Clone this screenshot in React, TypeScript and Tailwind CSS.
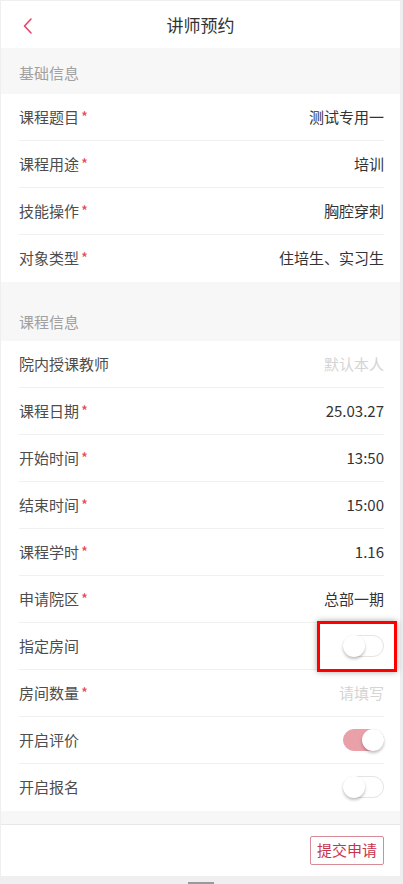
import React from 'react';

type Row = {
  label: string;
  required?: boolean;
  value?: string;
  placeholder?: boolean;
  toggle?: 'on' | 'off';
  highlight?: boolean;
};

const basicRows: Row[] = [
  { label: '课程题目', required: true, value: '测试专用一' },
  { label: '课程用途', required: true, value: '培训' },
  { label: '技能操作', required: true, value: '胸腔穿刺' },
  { label: '对象类型', required: true, value: '住培生、实习生' },
];

const courseRows: Row[] = [
  { label: '院内授课教师', value: '默认本人', placeholder: true },
  { label: '课程日期', required: true, value: '25.03.27' },
  { label: '开始时间', required: true, value: '13:50' },
  { label: '结束时间', required: true, value: '15:00' },
  { label: '课程学时', required: true, value: '1.16' },
  { label: '申请院区', required: true, value: '总部一期' },
  { label: '指定房间', toggle: 'off', highlight: true },
  { label: '房间数量', required: true, value: '请填写', placeholder: true },
  { label: '开启评价', toggle: 'on' },
  { label: '开启报名', toggle: 'off' },
];

const Toggle = ({ on }: { on: boolean }) => (
  <div
    className={`relative w-[41px] h-[22px] rounded-full border ${
      on ? 'bg-[#eaa0a9] border-[#eaa0a9]' : 'bg-white border-[#e4e4e4]'
    }`}
  >
    <div
      className={`absolute top-[-1px] w-[22px] h-[22px] rounded-full bg-white shadow-[0_2px_3px_rgba(0,0,0,0.25)] ${
        on ? 'right-[-1px]' : 'left-[-1px]'
      }`}
    ></div>
  </div>
);

const FormRow = ({ row, last }: { row: Row; last: boolean }) => (
  <div
    className="relative h-[47px] flex items-center justify-between ml-[18px] mr-[16px] border-b border-[#f0f0f0]"
    style={last ? { borderBottomColor: 'transparent' } : undefined}
  >
    <span className="text-[15px] text-[#4d4d4d]">
      {row.label}
      {row.required && <span className="text-[#e8454f] ml-[2px]">*</span>}
    </span>
    {row.toggle ? (
      <Toggle on={row.toggle === 'on'} />
    ) : (
      <span className={`text-[15px] ${row.placeholder ? 'text-[#d4d4d4]' : 'text-[#333333]'}`}>
        {row.value}
      </span>
    )}
    {row.highlight && (
      <div className="absolute right-[-13px] top-[-2px] w-[80px] h-[51px] border-[3px] border-[#ff0000] shadow-[0_0_6px_rgba(0,0,0,0.35)]"></div>
    )}
  </div>
);

export default function App() {
  return (
    <div
      className="w-[403px] h-[884px] bg-[#efefef] pl-[1px] pr-[3px] pt-[1px] flex flex-col overflow-hidden"
      style={{ fontFamily: '"Noto Sans CJK SC", "Noto Sans", sans-serif' }}
    >
      {/* Header */}
      <div className="relative h-[47px] bg-white flex items-center justify-center shrink-0">
        <svg className="absolute left-[21px] top-[16px]" width="12" height="18" viewBox="0 0 12 18" fill="none">
          <path d="M9 2 L2.5 9 L9 16" stroke="#e8466a" strokeWidth="1.6" strokeLinecap="round" strokeLinejoin="round" />
        </svg>
        <span className="text-[17px] text-[#333333]">讲师预约</span>
      </div>

      {/* Basic info */}
      <div className="h-[46px] bg-[#f7f7f7] flex items-end pb-[10px] px-[18px] shrink-0">
        <span className="text-[15px] text-[#a0a0a0]">基础信息</span>
      </div>
      <div className="bg-white shrink-0">
        {basicRows.map((r, i) => (
          <FormRow key={r.label} row={r} last={i === basicRows.length - 1} />
        ))}
      </div>

      {/* Course info */}
      <div className="h-[59px] bg-[#f7f7f7] flex items-end pb-[8px] px-[18px] shrink-0">
        <span className="text-[15px] text-[#a0a0a0]">课程信息</span>
      </div>
      <div className="bg-white shrink-0">
        {courseRows.map((r, i) => (
          <FormRow key={r.label} row={r} last={i === courseRows.length - 1} />
        ))}
      </div>

      <div className="h-[13px] bg-[#f7f7f7] shrink-0"></div>

      {/* Footer */}
      <div className="h-[52px] bg-white border-t border-[#e8e8e8] flex items-center justify-end pr-[16px] shrink-0">
        <button className="h-[29px] px-[6px] border border-[#d98a97] rounded-[2px] text-[15px] text-[#c8344c] bg-white">
          提交申请
        </button>
      </div>

      <div className="flex-1 flex items-end justify-center">
        <div className="w-[26px] h-[2px] bg-[#9a9a9a]"></div>
      </div>
    </div>
  );
}
